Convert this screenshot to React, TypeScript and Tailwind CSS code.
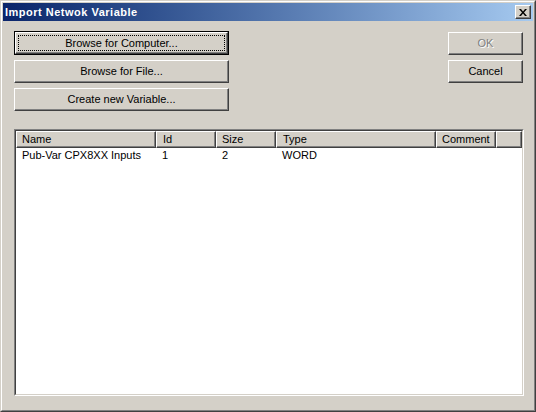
import React from "react"

const font = { fontFamily: '"Liberation Sans", Arial, sans-serif' }

const raised =
  "border border-t-white border-l-white border-b-[#404040] border-r-[#404040] shadow-[inset_-1px_-1px_#808080,inset_1px_1px_#d4d0c8]"

function Button({ label, width, isDefault, disabled }: { label: string; width: string; isDefault?: boolean; disabled?: boolean }) {
  if (isDefault) {
    return (
      <div className={`${width} h-[24px] border border-black bg-[#d4d0c8] flex`}>
        <div className={`flex-1 ${raised} p-[2px] flex`}>
          <div className="flex-1 border border-dotted border-black flex items-center justify-center text-[11px] text-black leading-none">
            {label}
          </div>
        </div>
      </div>
    )
  }
  return (
    <div
      className={`${width} h-[23px] bg-[#d4d0c8] ${raised} flex items-center justify-center text-[11px] leading-none ${
        disabled ? "text-[#808080] [text-shadow:1px_1px_0_#ffffff]" : "text-black"
      }`}
    >
      {label}
    </div>
  )
}

const columns = [
  { name: "Name", w: "w-[140px]", pl: "pl-[5px]" },
  { name: "Id", w: "w-[60px]", pl: "pl-[6px]" },
  { name: "Size", w: "w-[60px]", pl: "pl-[5px]" },
  { name: "Type", w: "w-[160px]", pl: "pl-[6px]" },
  { name: "Comment", w: "w-[60px]", pl: "pl-[5px]" },
]

const rows = [["Pub-Var CPX8XX Inputs", "1", "2", "WORD", ""]]

export default function App() {
  return (
    <div className="w-[536px] h-[412px] bg-[#d4d0c8]" style={font}>
      <div className="w-full h-full border border-t-[#d4d0c8] border-l-[#d4d0c8] border-b-[#404040] border-r-[#404040]">
        <div className="w-full h-full border border-t-white border-l-white border-b-[#808080] border-r-[#808080] p-[1px] flex flex-col">
          {/* title bar */}
          <div className="h-[18px] bg-gradient-to-r from-[#0a246a] to-[#a6caf0] flex items-center justify-between pl-[2px] pr-[2px]">
            <span className="text-white font-bold text-[11px] tracking-[0.5px] leading-none">Import Netwok Variable</span>
            <div className={`w-[16px] h-[14px] bg-[#d4d0c8] ${raised} flex items-center justify-center`}>
              <svg width="8" height="7" viewBox="0 0 8 7">
                <path d="M0 0h2l2 2.5L6 0h2L5 3.5 8 7H6L4 4.5 2 7H0l3-3.5z" fill="#000" />
              </svg>
            </div>
          </div>

          {/* content */}
          <div className="flex-1 flex flex-col pl-[11px] pt-[10px]">
            <div className="flex justify-between pr-[10px]">
              <div className="flex flex-col gap-[5px]">
                <Button label="Browse for Computer..." width="w-[215px]" isDefault />
                <Button label="Browse for File..." width="w-[215px]" />
                <Button label="Create new Variable..." width="w-[215px]" />
              </div>
              <div className="flex flex-col gap-[5px] pt-[1px]">
                <Button label="OK" width="w-[75px]" disabled />
                <Button label="Cancel" width="w-[75px]" />
              </div>
            </div>

            {/* list view */}
            <div className="mt-[18px] w-[510px] h-[267px] border border-t-[#808080] border-l-[#808080] border-b-white border-r-white">
              <div className="w-full h-full border border-t-[#404040] border-l-[#404040] border-b-[#d4d0c8] border-r-[#d4d0c8] bg-white flex flex-col">
                <div className="flex h-[17px] bg-[#d4d0c8] shrink-0">
                  {columns.map((c) => (
                    <div
                      key={c.name}
                      className={`${c.w} ${c.pl} h-full ${raised} flex items-center text-[11px] text-black leading-none`}
                    >
                      {c.name}
                    </div>
                  ))}
                  <div className={`flex-1 h-full ${raised}`} />
                </div>
                {rows.map((r, i) => (
                  <div key={i} className="flex h-[14px] items-center text-[11px] text-black leading-none">
                    {r.map((v, j) => (
                      <div key={j} className={`${columns[j].w} pl-[6px]`}>
                        {v}
                      </div>
                    ))}
                  </div>
                ))}
              </div>
            </div>
          </div>
        </div>
      </div>
    </div>
  )
}
